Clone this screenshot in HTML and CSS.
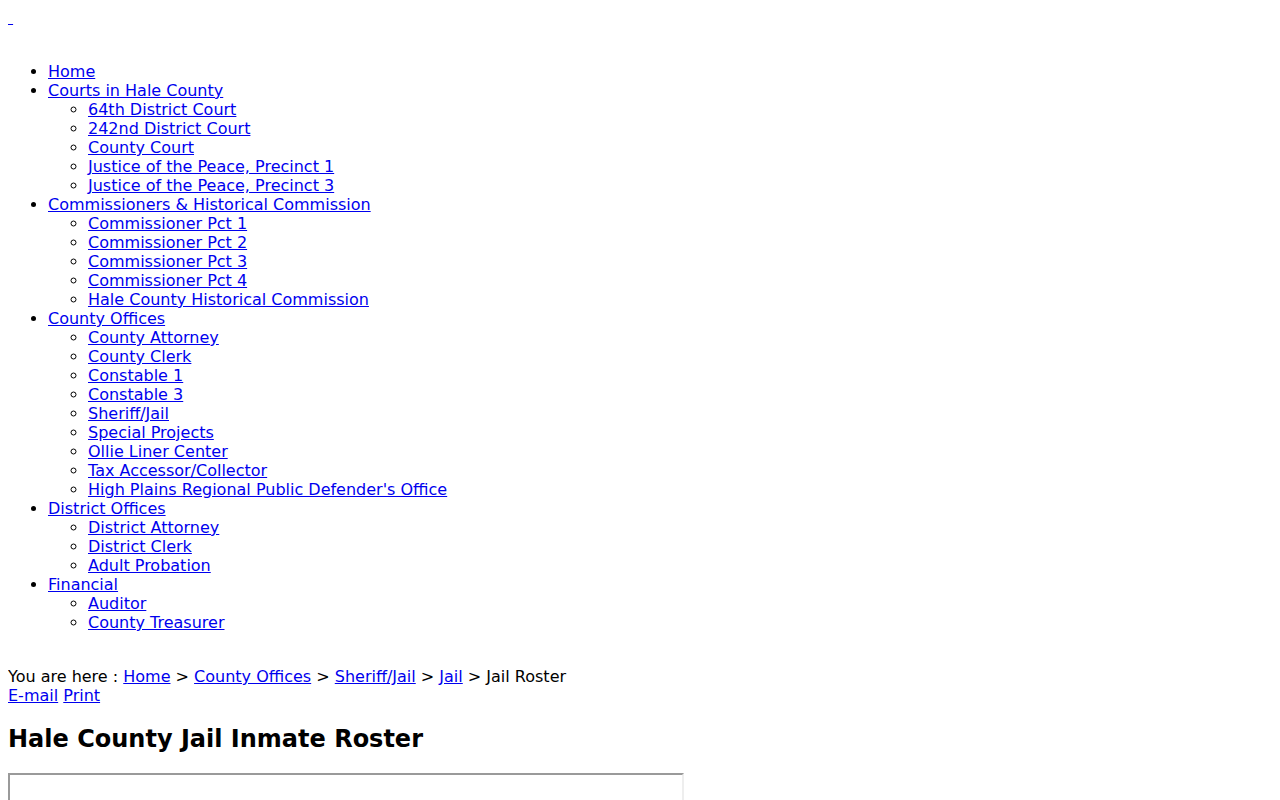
FILE: index.html
```html
<!DOCTYPE html>
<html>
<head>
<meta charset="utf-8">
<title>Hale County Jail Inmate Roster</title>
<link rel="stylesheet" href="styles.css">
</head>
<body>
<div class="logo"><a href="#">&nbsp;</a></div>
<div class="nav">
<ul class="menu">
<li><a href="#">Home</a></li>
<li><a href="#">Courts in Hale County</a>
<ul>
<li><a href="#">64th District Court</a></li>
<li><a href="#">242nd District Court</a></li>
<li><a href="#">County Court</a></li>
<li><a href="#">Justice of the Peace, Precinct 1</a></li>
<li><a href="#">Justice of the Peace, Precinct 3</a></li>
</ul></li>
<li><a href="#">Commissioners &amp; Historical Commission</a>
<ul>
<li><a href="#">Commissioner Pct 1</a></li>
<li><a href="#">Commissioner Pct 2</a></li>
<li><a href="#">Commissioner Pct 3</a></li>
<li><a href="#">Commissioner Pct 4</a></li>
<li><a href="#">Hale County Historical Commission</a></li>
</ul></li>
<li><a href="#">County Offices</a>
<ul>
<li><a href="#">County Attorney</a></li>
<li><a href="#">County Clerk</a></li>
<li><a href="#">Constable 1</a></li>
<li><a href="#">Constable 3</a></li>
<li><a href="#">Sheriff/Jail</a></li>
<li><a href="#">Special Projects</a></li>
<li><a href="#">Ollie Liner Center</a></li>
<li><a href="#">Tax Accessor/Collector</a></li>
<li><a href="#">High Plains Regional Public Defender's Office</a></li>
</ul></li>
<li><a href="#">District Offices</a>
<ul>
<li><a href="#">District Attorney</a></li>
<li><a href="#">District Clerk</a></li>
<li><a href="#">Adult Probation</a></li>
</ul></li>
<li><a href="#">Financial</a>
<ul>
<li><a href="#">Auditor</a></li>
<li><a href="#">County Treasurer</a></li>
</ul></li>
</ul>
</div>
<div class="breadcrumbs">You are here : <a href="#">Home</a> &gt; <a href="#">County Offices</a> &gt; <a href="#">Sheriff/Jail</a> &gt; <a href="#">Jail</a> &gt; Jail Roster</div>
<div class="tools"><a href="#">E-mail</a> <a href="#">Print</a></div>
<h2 class="title">Hale County Jail Inmate Roster</h2>
<div class="frame"></div>
</body>
</html>
```
FILE: styles.css
```css
html, body {
  background: #fff;
}
body {
  margin: 8px;
  font-family: "DejaVu Sans", sans-serif;
  font-size: 16px;
  line-height: 19px;
  color: #000;
}
a {
  color: #0000ee;
  text-decoration: underline;
}
.logo {
  height: 19px;
  padding-bottom: 19px;
}
.menu {
  margin: 16px 0 0 0;
  padding-left: 40px;
  list-style: disc;
}
.menu ul {
  margin: 0;
  padding-left: 40px;
  list-style: circle;
}
.breadcrumbs {
  margin-top: 35px;
}
.title {
  font-size: 24px;
  line-height: 28px;
  font-weight: bold;
  margin: 20px 0 20px 0;
}
.frame {
  width: 672px;
  height: 146px;
  border-style: solid;
  border-width: 2px;
  border-color: #9a9a9a #eeeeee #eeeeee #9a9a9a;
}
```
